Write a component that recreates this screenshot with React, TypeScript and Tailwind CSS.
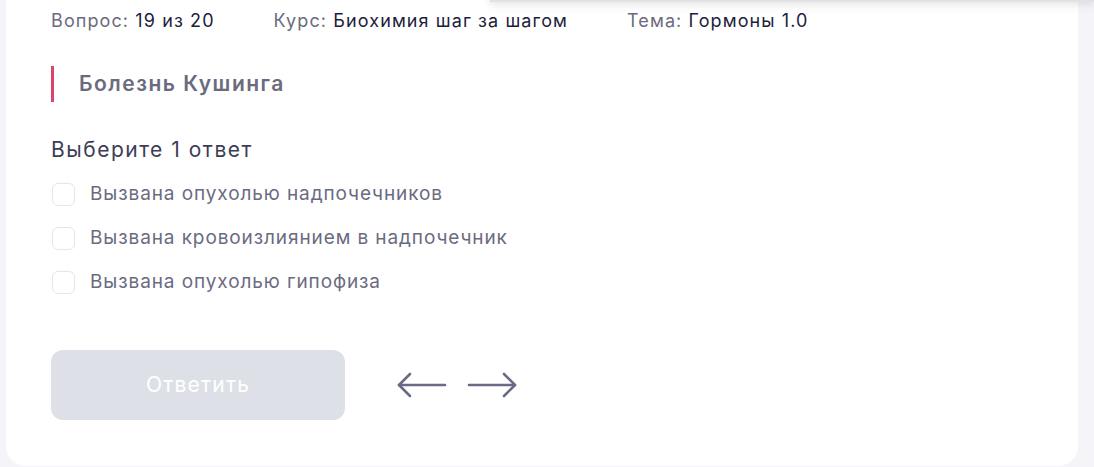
const options = [
  'Вызвана опухолью надпочечников',
  'Вызвана кровоизлиянием в надпочечник',
  'Вызвана опухолью гипофиза',
];

function Meta({ label, value }: { label: string; value: string }) {
  return (
    <span className="text-[18px] leading-none tracking-[1.1px] text-[#6b6b7d]">
      {label}: <span className="text-[#1d1d3b]">{value}</span>
    </span>
  );
}

function Arrow({ dir }: { dir: 'left' | 'right' }) {
  return (
    <svg width="50" height="26" viewBox="0 0 50 26" fill="none" stroke="currentColor" strokeWidth="2.6" strokeLinecap="round" strokeLinejoin="round">
      {dir === 'left' ? (
        <>
          <path d="M2 13H48" />
          <path d="M13 2L2 13L13 24" />
        </>
      ) : (
        <>
          <path d="M2 13H48" />
          <path d="M37 2L48 13L37 24" />
        </>
      )}
    </svg>
  );
}

export default function App() {
  return (
    <div
      className="relative h-[467px] w-[1094px] overflow-hidden bg-[#f4f4f9] pl-[6px] pr-[16px]"
      style={{ fontFamily: 'Inter, "Noto Sans", sans-serif' }}
    >
      <div className="h-[466px] rounded-b-[20px] bg-white pl-[45px]">
        <div className="flex gap-[59px] pt-[12px]">
          <Meta label="Вопрос" value="19 из 20" />
          <Meta label="Курс" value="Биохимия шаг за шагом" />
          <Meta label="Тема" value="Гормоны 1.0" />
        </div>

        <div className="mt-[36px] flex h-[36px] items-center border-l-[3px] border-[#d9466a] pl-[25px]">
          <span className="text-[21px] font-semibold tracking-[1.5px] text-[#6b6b7e]">Болезнь Кушинга</span>
        </div>

        <div className="mt-[37px] text-[21px] leading-none tracking-[1.5px] text-[#3d3d56]">Выберите 1 ответ</div>

        <div className="mt-[22px] flex flex-col gap-[20px]">
          {options.map((o) => (
            <label key={o} className="flex h-[24px] items-center gap-[15px]">
              <span className="ml-[1px] h-[23px] w-[23px] rounded-[6px] border border-[#e5e5ee] bg-white" />
              <span className="text-[19px] tracking-[0.9px] text-[#6b6b7f]">{o}</span>
            </label>
          ))}
        </div>

        <div className="mt-[56px] flex items-center gap-[52px]">
          <button
            type="button"
            className="h-[70px] w-[294px] rounded-[12px] bg-[#dde1e7] text-[21px] tracking-[1.2px] text-white"
          >
            Ответить
          </button>
          <div className="flex items-center gap-[20px] text-[#6a6a86]">
            <Arrow dir="left" />
            <Arrow dir="right" />
          </div>
        </div>
      </div>

      <div className="absolute left-[490px] right-0 top-[-20px] h-[22px] bg-[#e2e2e4] shadow-[0_3px_10px_rgba(0,0,0,0.1)]" />
    </div>
  );
}
